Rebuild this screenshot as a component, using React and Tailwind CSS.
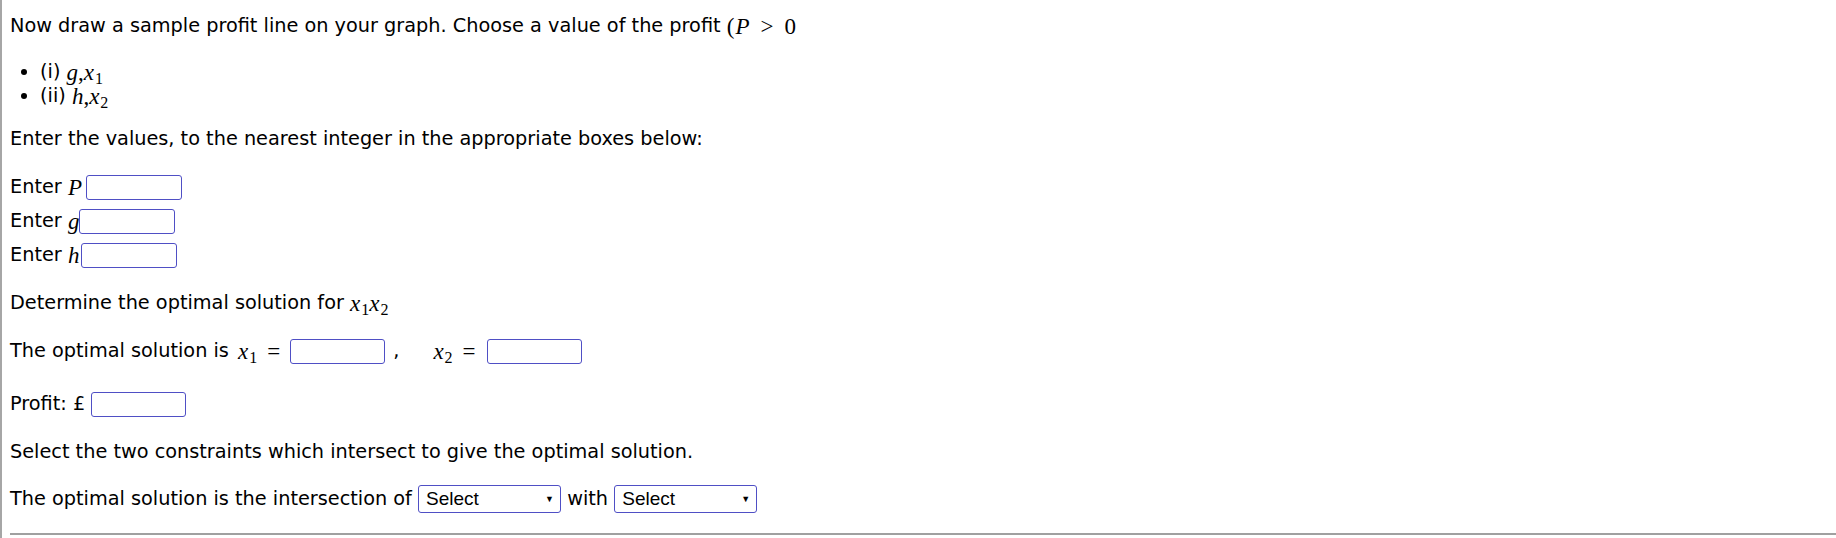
import React from "react"

const sans = "font-['DejaVu_Sans',Verdana,sans-serif]"
const mathCls = "font-['Liberation_Serif',serif] text-[23px] leading-none"

function M({ children, italic = true, className = "" }) {
  return <span className={`${mathCls} ${italic ? "italic" : ""} ${className}`}>{children}</span>
}

function Sub({ children }) {
  return <span className="text-[16px] not-italic relative top-[4px] ml-[1px]">{children}</span>
}

function Box({ w = "w-[96px]" }) {
  return (
    <input
      type="text"
      className={`${w} h-[25px] border border-[#4f4fc5] rounded-[3px] bg-white px-1 outline-none`}
    />
  )
}

function Dropdown() {
  return (
    <div className="inline-flex w-[143px] h-[28px] items-center justify-between border border-[#4f4fc5] rounded-[3px] bg-white pl-[7px] pr-[6px] font-['Liberation_Sans',Arial,sans-serif] text-[19px] text-black">
      <span>Select</span>
      <span className="text-[9px] leading-none">▼</span>
    </div>
  )
}

function Line({ className = "", children }) {
  return <div className={`h-[24px] flex items-center whitespace-nowrap ${className}`}>{children}</div>
}

function Row({ className = "", children }) {
  return <div className={`h-[34px] flex items-center whitespace-nowrap ${className}`}>{children}</div>
}

export default function App() {
  return (
    <div className={`${sans} text-[19.3px] text-black bg-white h-[538px] overflow-hidden border-l-2 border-[#a6a6a6] pl-[8px] pt-[14px]`}>
      <Line>
        Now draw a sample profit line on your graph. Choose a value of the profit&nbsp;
        <M italic={false}>(</M>
        <M className="ml-[1px]">P</M>
        <M italic={false} className="mx-[11px]">&gt;</M>
        <M italic={false}>0</M>
      </Line>

      <ul className="list-disc pl-[30px] mt-[20px]">
        <li className="h-[24px]">
          <Line>
            (i)&nbsp;<M>g</M>
            <M italic={false}>,</M>
            <M>
              x<Sub>1</Sub>
            </M>
          </Line>
        </li>
        <li className="h-[24px]">
          <Line>
            (ii)&nbsp;<M>h</M>
            <M italic={false}>,</M>
            <M>
              x<Sub>2</Sub>
            </M>
          </Line>
        </li>
      </ul>

      <Line className="mt-[21px]">
        Enter the values, to the nearest integer in the appropriate boxes below:
      </Line>

      <div className="mt-[19px]">
        <Row>
          <span>Enter&nbsp;</span>
          <M className="mr-[4px]">P</M>
          <Box />
        </Row>
        <Row>
          <span>Enter&nbsp;</span>
          <M>g</M>
          <Box />
        </Row>
        <Row>
          <span>Enter&nbsp;</span>
          <M className="mr-[2px]">h</M>
          <Box />
        </Row>
      </div>

      <Line className="mt-[19px]">
        Determine the optimal solution for&nbsp;
        <M>
          x<Sub>1</Sub>x<Sub>2</Sub>
        </M>
      </Line>

      <Row className="mt-[19px]">
        <span>The optimal solution is&nbsp;</span>
        <M className="ml-[3px]">
          x<Sub>1</Sub>
        </M>
        <M italic={false} className="mx-[10px]">=</M>
        <Box w="w-[95px]" />
        <span className="ml-[8px]">,</span>
        <span className="w-[34px]" />
        <M>
          x<Sub>2</Sub>
        </M>
        <M italic={false} className="ml-[10px] mr-[11px]">=</M>
        <Box w="w-[95px]" />
      </Row>

      <Row className="mt-[19px]">
        <span>Profit: £&nbsp;</span>
        <Box w="w-[95px]" />
      </Row>

      <Line className="mt-[19px]">
        Select the two constraints which intersect to give the optimal solution.
      </Line>

      <Row className="mt-[18px]">
        <span>The optimal solution is the intersection of&nbsp;</span>
        <Dropdown />
        <span>&nbsp;with&nbsp;</span>
        <Dropdown />
      </Row>

      <hr className="mt-[17px] border-t-2 border-[#a0a0a0]" />
    </div>
  )
}
